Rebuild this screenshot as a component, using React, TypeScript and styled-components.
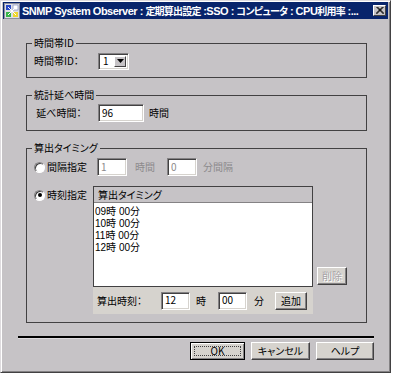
import styled, { createGlobalStyle } from 'styled-components';

const GlobalStyle = createGlobalStyle`
  body {
    margin: 0;
    background: #ffffff;
    font-family: "Noto Sans CJK JP", "Liberation Sans", sans-serif;
    font-size: 10px;
    font-feature-settings: "palt";
    color: #000;
  }
`;

const Window = styled.div`
  width: 391px;
  height: 373px;
  box-sizing: border-box;
  background: #c6c3c6;
  border: 1px solid;
  border-color: #dedbde #424142 #424142 #dedbde;
  box-shadow: inset 1px 1px 0 #ffffff, inset -1px -1px 0 #848284;
  padding: 1px 2px 2px 2px;
  display: flex;
  flex-direction: column;
`;

const TitleBar = styled.div`
  height: 17px;
  background: #08246b;
  display: flex;
  align-items: center;
  padding: 0 2px 0 1px;
  gap: 2px;
`;

const TitleText = styled.div`
  flex: 1;
  color: #ffffff;
  font-family: "Liberation Sans", "Noto Sans CJK JP", sans-serif;
  font-weight: bold;
  font-size: 11px;
  letter-spacing: -0.5px;
  line-height: 17px;
  white-space: nowrap;
  overflow: hidden;
`;

const TitleJa = styled.span`
  font-family: "Noto Sans CJK JP", sans-serif;
  font-size: 10px;
  letter-spacing: -0.8px;
`;

const CloseButton = styled.div`
  width: 13px;
  height: 11px;
  box-sizing: border-box;
  background: #c6c3c6;
  border: 1px solid;
  border-color: #ffffff #424142 #424142 #ffffff;
  display: flex;
  align-items: center;
  justify-content: center;
  flex-shrink: 0;
`;

const Body = styled.div`
  padding: 18px 14px 0 15px;
  display: flex;
  flex-direction: column;
`;

const Group = styled.fieldset<{ $gap?: number; $pb?: number }>`
  margin: ${({ $gap }) => $gap ?? 0}px 7px 0 8px;
  padding: 3px 7px ${({ $pb }) => $pb ?? 7}px 7px;
  border: 1px solid #424142;
  min-width: 0;
`;

const Legend = styled.legend`
  font-size: 10px;
  line-height: 12px;
  padding: 0 2px;
  margin-left: -2px;
`;

const Row = styled.div<{ $h?: number }>`
  display: flex;
  align-items: center;
  height: ${({ $h }) => $h ?? 18}px;
  line-height: 12px;
  white-space: nowrap;
`;

const Label = styled.span<{ $w?: number; $disabled?: boolean }>`
  display: inline-block;
  width: ${({ $w }) => ($w ? `${$w}px` : 'auto')};
  color: ${({ $disabled }) => ($disabled ? '#8c8a8c' : '#000')};
  flex-shrink: 0;
`;

const Field = styled.input<{ $w: number }>`
  width: ${({ $w }) => $w}px;
  height: 18px;
  box-sizing: border-box;
  margin: 0;
  padding: 0 2px 2px 3px;
  font-family: "Noto Sans CJK JP", "Liberation Sans", sans-serif;
  font-size: 10px;
  color: ${({ disabled }) => (disabled ? '#8c8a8c' : '#000')};
  background: #ffffff;
  border: 1px solid;
  border-color: #848284 #ffffff #ffffff #848284;
  box-shadow: inset 1px 1px 0 #424142, inset -1px -1px 0 #d6d3ce;
  outline: none;
  flex-shrink: 0;
`;

const Combo = styled.div`
  width: 31px;
  height: 17px;
  box-sizing: border-box;
  background: #ffffff;
  border: 1px solid;
  border-color: #848284 #ffffff #ffffff #848284;
  box-shadow: inset 1px 1px 0 #424142, inset -1px -1px 0 #d6d3ce;
  display: flex;
  align-items: center;
  justify-content: space-between;
  padding: 2px 2px 2px 4px;
  line-height: 12px;
`;

const ComboArrow = styled.div`
  width: 12px;
  height: 11px;
  box-sizing: border-box;
  background: #c6c3c6;
  border: 1px solid;
  border-color: #ffffff #424142 #424142 #ffffff;
  display: flex;
  align-items: center;
  justify-content: center;
`;

const RadioRow = styled.label`
  display: flex;
  align-items: center;
  gap: 2px;
  width: 63px;
  flex-shrink: 0;
`;

const RadioDot = styled.span<{ $checked?: boolean }>`
  width: 9px;
  height: 9px;
  border-radius: 50%;
  background: #ffffff;
  border: 1px solid;
  border-color: #848284 #ffffff #ffffff #848284;
  box-shadow: inset 1px 1px 0 #424142;
  display: flex;
  align-items: center;
  justify-content: center;
  &::after {
    content: '';
    width: 4px;
    height: 4px;
    border-radius: 50%;
    background: ${({ $checked }) => ($checked ? '#000' : 'transparent')};
  }
`;

const TimingRow = styled.div`
  display: flex;
  margin-top: 10px;
  line-height: 12px;
`;

const TimingRadio = styled(RadioRow)`
  align-self: flex-start;
  padding-top: 3px;
  width: 59px;
`;

const PanelColumn = styled.div`
  display: flex;
  flex-direction: column;
  width: 220px;
`;

const ListBox = styled.div`
  border: 1px solid #424142;
  height: 99px;
  display: flex;
  flex-direction: column;
`;

const ListHeader = styled.div`
  height: 16px;
  box-sizing: border-box;
  border-bottom: 1px solid #848284;
  padding: 2px 4px 0;
  line-height: 12px;
  background: #c6c3c6;
`;

const ListBody = styled.div`
  flex: 1;
  background: #ffffff;
  padding: 3px 1px 0;
`;

const ListItem = styled.div`
  height: 12px;
  font-family: "Liberation Sans", "Noto Sans CJK JP", sans-serif;
  line-height: 12px;
  white-space: nowrap;
`;

const TimeBar = styled.div`
  display: flex;
  align-items: center;
  height: 27px;
  background: #d6d3ce;
  padding: 0 2px 0 4px;
  white-space: nowrap;
`;

const SideColumn = styled.div`
  padding-top: 81px;
  margin-left: 4px;
`;

const Button = styled.button<{ $w: number; $default?: boolean }>`
  width: ${({ $w }) => $w}px;
  height: 18px;
  box-sizing: border-box;
  margin: 0;
  padding: 0;
  font-family: "Noto Sans CJK JP", "Liberation Sans", sans-serif;
  font-size: 10px;
  font-feature-settings: "palt";
  line-height: 12px;
  color: ${({ disabled }) => (disabled ? '#a5a2a5' : '#000')};
  text-shadow: ${({ disabled }) => (disabled ? '1px 1px 0 #ffffff' : 'none')};
  background: #d6d3ce;
  border: 1px solid;
  border-color: ${({ $default }) => ($default ? '#000 #000 #000 #000' : '#ffffff #424142 #424142 #ffffff')};
  box-shadow: ${({ $default }) =>
    $default
      ? 'inset 1px 1px 0 #ffffff, inset -1px -1px 0 #848284'
      : 'inset -1px -1px 0 #848284'};
  position: relative;
  flex-shrink: 0;
`;

const FocusRing = styled.span`
  position: absolute;
  inset: 3px;
  border: 1px dotted #424142;
`;

const Separator = styled.div`
  margin: 13px 0 0 0;
  height: 2px;
  background: #000000;
  border-bottom: 1px solid #dedbde;
`;

const ButtonBar = styled.div`
  display: flex;
  justify-content: flex-end;
  gap: 6px;
  margin-top: 3px;
`;

const AppIcon = () => (
  <svg width="16" height="16" viewBox="0 0 16 16">
    <rect x="0.5" y="0.5" width="15" height="15" fill="#dedfe7" stroke="#8c8e9c" />
    <rect x="2" y="2" width="5" height="5" fill="#2949c6" />
    <rect x="9" y="2" width="5" height="5" fill="#ffffff" stroke="#6b7bb5" strokeWidth="0.6" />
    <rect x="2" y="9" width="5" height="5" fill="#39b54a" />
    <rect x="9" y="9" width="5" height="5" fill="#efd631" />
    <path d="M4 4 L12 12 M12 4 L4 12" stroke="#ffffff" strokeWidth="1" />
  </svg>
);

export default function App() {
  return (
    <>
      <GlobalStyle />
      <Window>
        <TitleBar>
          <AppIcon />
          <TitleText>
            SNMP System Observer : <TitleJa>定期算出設定</TitleJa> :SSO : <TitleJa>コンピュータ</TitleJa> : CPU
            <TitleJa>利用率</TitleJa> :...
          </TitleText>
          <CloseButton>
            <svg width="8" height="7" viewBox="0 0 8 7">
              <path d="M0.5 0 L7.5 7 M1.5 0 L8 6.5 M7.5 0 L0.5 7 M6.5 0 L0 6.5" stroke="#000" strokeWidth="1" />
            </svg>
          </CloseButton>
        </TitleBar>
        <Body>
          <Group>
            <Legend>時間帯ID</Legend>
            <Row>
              <Label $w={64}>時間帯ID：</Label>
              <Combo>
                <span>1</span>
                <ComboArrow>
                  <svg width="7" height="4" viewBox="0 0 7 4">
                    <path d="M0 0 H7 L3.5 4 Z" fill="#000" />
                  </svg>
                </ComboArrow>
              </Combo>
            </Row>
          </Group>

          <Group $gap={11} $pb={8}>
            <Legend>統計延べ時間</Legend>
            <Row>
              <Label $w={64}>&nbsp;延べ時間：</Label>
              <Field $w={46} defaultValue="96" readOnly />
              <Label style={{ marginLeft: 5 }}>時間</Label>
            </Row>
          </Group>

          <Group $gap={11} $pb={8}>
            <Legend>算出タイミング</Legend>
            <Row style={{ marginTop: 1 }}>
              <RadioRow>
                <RadioDot />
                間隔指定
              </RadioRow>
              <Field $w={30} defaultValue="1" disabled />
              <Label $disabled style={{ margin: '0 12px 0 8px' }}>時間</Label>
              <Field $w={30} defaultValue="0" disabled />
              <Label $disabled style={{ marginLeft: 6 }}>分間隔</Label>
            </Row>
            <TimingRow>
              <TimingRadio>
                <RadioDot $checked />
                時刻指定
              </TimingRadio>
              <PanelColumn>
                <ListBox>
                  <ListHeader>算出タイミング</ListHeader>
                  <ListBody>
                    {['09時 00分', '10時 00分', '11時 00分', '12時 00分'].map((t) => (
                      <ListItem key={t}>{t}</ListItem>
                    ))}
                  </ListBody>
                </ListBox>
                <TimeBar>
                  <Label $w={64}>算出時刻：</Label>
                  <Field $w={29} defaultValue="12" readOnly />
                  <Label style={{ margin: '0 12px 0 6px' }}>時</Label>
                  <Field $w={29} defaultValue="00" readOnly />
                  <Label style={{ margin: '0 11px 0 7px' }}>分</Label>
                  <Button $w={32}>追加</Button>
                </TimeBar>
              </PanelColumn>
              <SideColumn>
                <Button $w={30} disabled>
                  削除
                </Button>
              </SideColumn>
            </TimingRow>
          </Group>

          <Separator />
          <ButtonBar>
            <Button $w={55} $default>
              OK
              <FocusRing />
            </Button>
            <Button $w={59}>キャンセル</Button>
            <Button $w={58}>ヘルプ</Button>
          </ButtonBar>
        </Body>
      </Window>
    </>
  );
}
